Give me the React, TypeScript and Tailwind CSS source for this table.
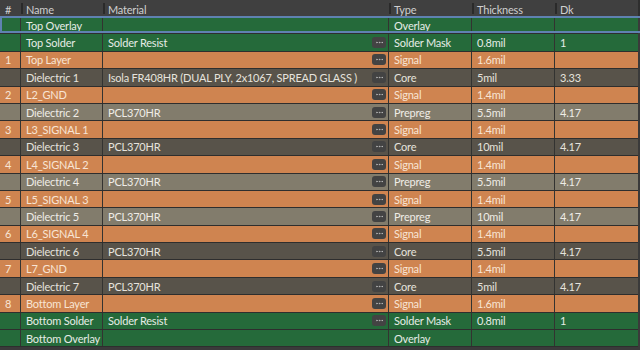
import { MoreHorizontal } from 'lucide-react';

type Kind = 'overlay' | 'solder' | 'signal' | 'core' | 'prepreg';

interface Layer {
    num?: string;
    name: string;
    material: string;
    kind: Kind;
    type: string;
    thickness: string;
    dk: string;
    dots: boolean;
    selected?: boolean;
}

const layers: Layer[] = [
    { name: 'Top Overlay', material: '', kind: 'overlay', type: 'Overlay', thickness: '', dk: '', dots: false, selected: true },
    { name: 'Top Solder', material: 'Solder Resist', kind: 'solder', type: 'Solder Mask', thickness: '0.8mil', dk: '1', dots: true },
    { num: '1', name: 'Top Layer', material: '', kind: 'signal', type: 'Signal', thickness: '1.6mil', dk: '', dots: true },
    { name: 'Dielectric 1', material: 'Isola FR408HR (DUAL PLY, 2x1067, SPREAD GLASS )', kind: 'core', type: 'Core', thickness: '5mil', dk: '3.33', dots: true },
    { num: '2', name: 'L2_GND', material: '', kind: 'signal', type: 'Signal', thickness: '1.4mil', dk: '', dots: true },
    { name: 'Dielectric 2', material: 'PCL370HR', kind: 'prepreg', type: 'Prepreg', thickness: '5.5mil', dk: '4.17', dots: true },
    { num: '3', name: 'L3_SIGNAL 1', material: '', kind: 'signal', type: 'Signal', thickness: '1.4mil', dk: '', dots: true },
    { name: 'Dielectric 3', material: 'PCL370HR', kind: 'core', type: 'Core', thickness: '10mil', dk: '4.17', dots: true },
    { num: '4', name: 'L4_SIGNAL 2', material: '', kind: 'signal', type: 'Signal', thickness: '1.4mil', dk: '', dots: true },
    { name: 'Dielectric 4', material: 'PCL370HR', kind: 'prepreg', type: 'Prepreg', thickness: '5.5mil', dk: '4.17', dots: true },
    { num: '5', name: 'L5_SIGNAL 3', material: '', kind: 'signal', type: 'Signal', thickness: '1.4mil', dk: '', dots: true },
    { name: 'Dielectric 5', material: 'PCL370HR', kind: 'prepreg', type: 'Prepreg', thickness: '10mil', dk: '4.17', dots: true },
    { num: '6', name: 'L6_SIGNAL 4', material: '', kind: 'signal', type: 'Signal', thickness: '1.4mil', dk: '', dots: true },
    { name: 'Dielectric 6', material: 'PCL370HR', kind: 'core', type: 'Core', thickness: '5.5mil', dk: '4.17', dots: true },
    { num: '7', name: 'L7_GND', material: '', kind: 'signal', type: 'Signal', thickness: '1.4mil', dk: '', dots: true },
    { name: 'Dielectric 7', material: 'PCL370HR', kind: 'core', type: 'Core', thickness: '5mil', dk: '4.17', dots: true },
    { num: '8', name: 'Bottom Layer', material: '', kind: 'signal', type: 'Signal', thickness: '1.6mil', dk: '', dots: true },
    { name: 'Bottom Solder', material: 'Solder Resist', kind: 'solder', type: 'Solder Mask', thickness: '0.8mil', dk: '1', dots: true },
    { name: 'Bottom Overlay', material: '', kind: 'overlay', type: 'Overlay', thickness: '', dk: '', dots: false },
];

const rowColors: Record<Kind, string> = {
    overlay: 'bg-[#256a3a] text-[#e6ece6]',
    solder: 'bg-[#256a3a] text-[#e6ece6]',
    signal: 'bg-[#cf8450] text-[#f8e4d4]',
    core: 'bg-[#58534a] text-[#e6e3dd]',
    prepreg: 'bg-[#827c6c] text-[#efece6]',
};

const cols = 'grid grid-cols-[21px_82px_286px_83px_83px_81px]';

function Cell({ children, last }: { children?: React.ReactNode; last?: boolean }) {
    return (
        <div className={`flex items-center px-[5px] overflow-hidden whitespace-nowrap ${last ? '' : 'border-r border-[#333331]'}`}>
            {children}
        </div>
    );
}

export default function App() {
    return (
        <div className="w-[640px] h-[350px] bg-[#3a3a3a] overflow-hidden text-[11px] tracking-[-0.2px] leading-none" style={{ fontFamily: 'Lato, "Noto Sans", sans-serif' }}>
            {/* Header */}
            <div className={`${cols} h-[17px] bg-[#404040] text-[#cfcfcf] border-r-2 border-[#2e2e2e]`}>
                {['#', 'Name', 'Material', 'Type', 'Thickness', 'Dk'].map((h, i) => (
                    <div key={h} className="relative flex items-center pl-[5px] pt-[1px]">
                        {i > 0 && <span className="absolute left-0 top-[3px] h-[11px] w-[2px] bg-[#2a2a2a]" />}
                        {h}
                    </div>
                ))}
            </div>

            {/* Rows */}
            {layers.map((l) => (
                <div
                    key={l.name}
                    className={`${cols} relative h-[17.4px] border-b border-[#2e2e2e] mr-[2px] ${rowColors[l.kind]}`}
                >
                    <Cell>{l.num}</Cell>
                    <Cell>{l.name}</Cell>
                    <div className="flex items-center justify-between pl-[5px] pr-[2px] border-r border-[#333331] whitespace-nowrap overflow-hidden">
                        <span>{l.material}</span>
                        {l.dots && (
                            <span className="flex items-center justify-center w-[14px] h-[11px] rounded-[3px] bg-[#434343] text-[#bdbdbd]">
                                <MoreHorizontal size={9} strokeWidth={2} />
                            </span>
                        )}
                    </div>
                    <Cell>{l.type}</Cell>
                    <Cell>{l.thickness}</Cell>
                    <Cell last>{l.dk}</Cell>
                    {l.selected && (
                        <span className="pointer-events-none absolute inset-0 top-[-1px] border-y-2 border-l-2 border-[#5f82b1] -mr-[2px]" />
                    )}
                </div>
            ))}
        </div>
    );
}
